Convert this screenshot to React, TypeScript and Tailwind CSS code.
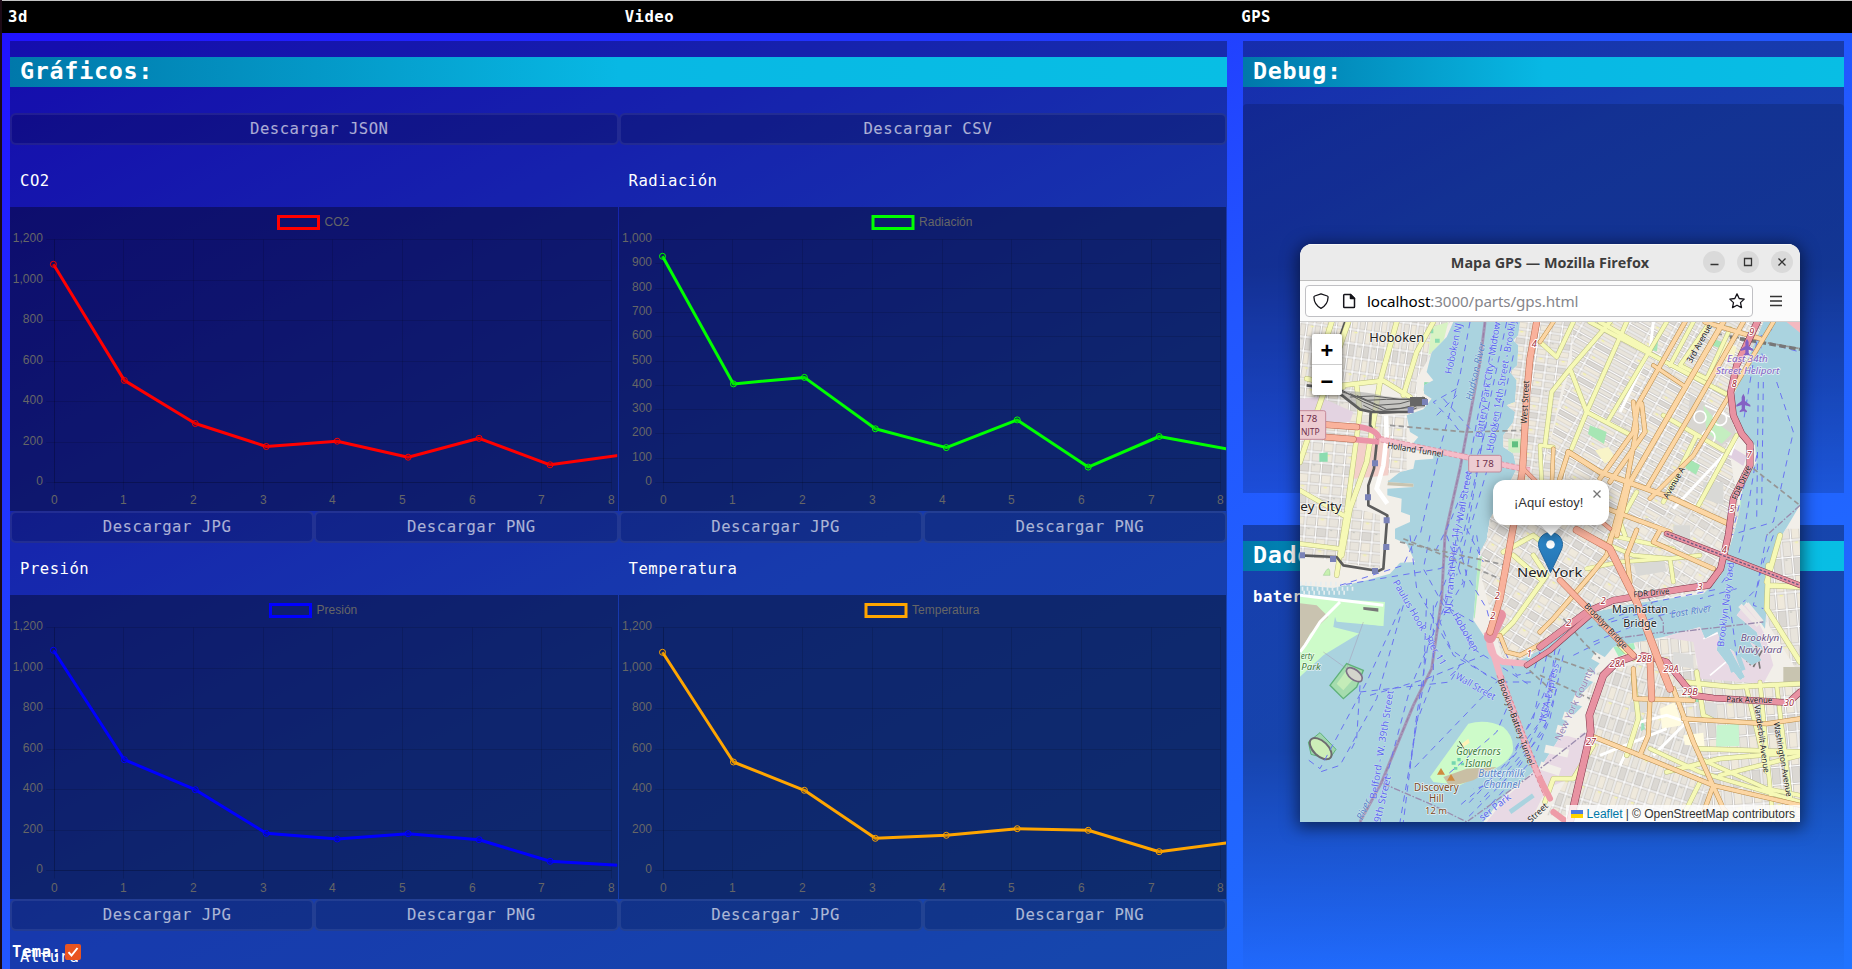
import React from "react";

const MONO = "font-['DejaVu_Sans_Mono','Liberation_Mono',monospace]";
const MONO_BOLD = "font-['DejaVu_Sans_Mono','Liberation_Mono',monospace] font-bold";

/* ---------- Charts ---------- */

type ChartProps = {
  label: string;
  color: string;
  legendX: number;
  originX: number;
  max: number;
  step: number;
  points: number[];
};

function LineChart({ label, color, legendX, originX, max, step, points }: ChartProps) {
  const top = 32.5;
  const bottom = 275.5;
  const gridStep = 69.68;
  const ticks: number[] = [];
  for (let v = 0; v <= max; v += step) ticks.push(v);
  const yOf = (v: number) => Math.round(bottom - (v / max) * (bottom - top) - 0.5) + 0.5;
  const xOf = (i: number) => Math.round(originX + i * gridStep - 0.5) + 0.5;
  const px = (i: number) => originX - 0.8 + i * 70.95;
  const line = points.map((y, i) => `${px(i)},${y}`).join(" ");
  return (
    <svg className="block h-[304px] w-full bg-black/[0.36]" fontFamily="'Liberation Sans', Arial, sans-serif" fontSize="12" fill="#666">
      <g stroke="rgba(0,0,0,0.12)" strokeWidth="1">
        {ticks.map((v) => (
          <line key={v} x1={originX - 8} x2={xOf(8)} y1={yOf(v)} y2={yOf(v)} />
        ))}
        {[0, 1, 2, 3, 4, 5, 6, 7, 8].map((i) => (
          <line key={i} x1={xOf(i)} x2={xOf(i)} y1={top} y2={bottom + 8} />
        ))}
        <line x1={originX} x2={xOf(8)} y1={bottom} y2={bottom} />
        <line x1={xOf(0)} x2={xOf(0)} y1={top} y2={bottom} />
      </g>
      {ticks.map((v) => (
        <text key={v} x={originX - 11.3} y={yOf(v) + 2.5} textAnchor="end">
          {v.toLocaleString("en-US")}
        </text>
      ))}
      {[0, 1, 2, 3, 4, 5, 6, 7, 8].map((i) => (
        <text key={i} x={xOf(i) - 0.2} y={297} textAnchor="middle">
          {i}
        </text>
      ))}
      <rect x={legendX + 1.5} y={9.5} width={40} height={12} fill="none" stroke={color} strokeWidth="3" />
      <text x={legendX + 47.6} y={18.5}>
        {label}
      </text>
      <svg x="0" y="0" width={originX + 563} height="304">
        <polyline points={line} fill="none" stroke={color} strokeWidth="3" strokeLinejoin="round" />
        {points.slice(0, 8).map((y, i) => (
          <circle key={i} cx={px(i)} cy={y} r="3" fill="rgba(0,0,0,0.1)" stroke={color} strokeWidth="1" />
        ))}
      </svg>
    </svg>
  );
}

function DownloadButton({ children }: { children: React.ReactNode }) {
  return (
    <button
      className={`h-8 flex-1 rounded-[6px] border-2 border-white/[0.07] bg-black/20 pl-[10px] text-center text-[15.6px] leading-[26px] tracking-[0.5px] text-white/65 ${MONO}`}
    >
      {children}
    </button>
  );
}

function ChartCard(props: ChartProps) {
  return (
    <div className="flex w-1/2 flex-col">
      <div className={`flex h-[52px] items-center pl-[10px] pt-[2px] text-[15.6px] tracking-[0.5px] text-white ${MONO}`}>{props.label}</div>
      <div className="mr-px">
        <LineChart {...props} />
      </div>
      <div className="flex">
        <DownloadButton>Descargar JPG</DownloadButton>
        <DownloadButton>Descargar PNG</DownloadButton>
      </div>
    </div>
  );
}

const charts: ChartProps[] = [
  { label: "CO2", color: "#ff0000", legendX: 267, originX: 44.2, max: 1200, step: 200, points: [57.3, 173.4, 216.5, 239.5, 234.2, 250.2, 231.3, 257.8, 248] },
  { label: "Radiación", color: "#00ff00", legendX: 252.5, originX: 44.3, max: 1000, step: 100, points: [49.3, 176.9, 170.4, 221.8, 240.6, 212.9, 260.1, 229.5, 242.5] },
  { label: "Presión", color: "#0000ff", legendX: 259, originX: 44.2, max: 1200, step: 200, points: [55.3, 164.7, 194.7, 238.3, 244, 238.7, 244.7, 266.3, 270.3] },
  { label: "Temperatura", color: "#ffa500", legendX: 245.5, originX: 44.3, max: 1200, step: 200, points: [57.3, 167, 195.3, 243.3, 240.3, 233.7, 235.3, 256.7, 247.5] },
];

function SectionTitle({ children }: { children: React.ReactNode }) {
  return (
    <h2
      className={`h-[30px] bg-[linear-gradient(90deg,#0078aa,#08b8e4_50%,#08bee4)] pl-[10px] text-[23.4px] leading-[29px] tracking-[0.7px] text-white ${MONO_BOLD}`}
    >
      {children}
    </h2>
  );
}

/* ---------- Map ---------- */

type Road = [string, number];

const yellow: Road[] = [
  ["M145 0L30 330L0 420", 14], ["M95 0L60 110M290 0L240 180L200 420L150 560L125 700", 14], ["M400 0L350 90L310 220", 13],
  ["M125 190L250 176L330 225M20 170L130 195M170 190L180 270L140 570L110 760", 13], ["M0 505L130 580M0 665L120 680", 12],
  ["M820 0L770 105L720 60M810 140L755 210L735 370M810 140L860 270L815 380M980 0L860 270M930 0L810 140", 12],
  ["M870 0L1040 90L1290 222M860 270L985 335M1090 280L1270 385M900 0L1050 85", 12], ["M1100 0L925 295M1180 0L1110 130M1230 0L1140 130L1220 170L1290 20", 11],
  ["M1190 340L1090 540M1310 340L1190 560M1010 510L960 600L975 640", 12], ["M720 370L760 375M720 370L725 480", 10],
  ["M860 640L1000 700L1110 710L1200 700M1110 710L1120 780M860 740L960 720L1090 710M930 640L1120 680", 11],
  ["M610 690L700 640L750 680M700 700L740 760L640 900L600 940M640 700L720 770", 13],
  ["M1405 790L1500 795M1405 730L1400 860L1500 1020M1440 640L1400 780", 14],
  ["M1150 1080L1300 1095L1500 1085M1190 1050L1210 1180L1240 1195M1190 1280L1500 1290M1100 1350L1260 1310L1500 1290", 13],
  ["M1050 1280L1200 1350L1500 1440M1200 1310L1400 1400L1500 1420M1380 1080L1420 1500M1430 1090L1480 1500M1340 1100L1400 1350", 11],
  ["M1000 1060L1015 1190L980 1300M880 1270L820 1370L760 1370L735 1440M960 970L1000 1010", 13],
  ["M1200 1380L1150 1480M1260 1360L1500 1300", 12],
];

const orange: Road[] = [
  ["M1155 0L1015 245L1000 330L900 470M1025 245L1035 330L930 480", 12], ["M1270 0L1130 240L985 490L950 640", 14],
  ["M1330 0L1170 280L1040 500", 12], ["M1420 0L1180 400L1050 530", 11], ["M1215 0L1380 50", 12],
  ["M805 390L900 450L1120 530L1285 605", 14], ["M805 390L770 500", 12], ["M1000 240L1010 320L980 480L920 700L880 750L760 890L720 930", 12],
  ["M870 540L1000 590L1110 630M980 500L950 600L920 680", 12], ["M1010 624L980 700L990 780M1080 624L1060 660L1240 740", 12],
  ["M1000 1040L1005 1130L1180 1135M1050 1130L1045 1240L1020 1300M1120 1100L1180 1260L1270 1460L1310 1500M1150 1190L1400 1205L1500 1190", 12],
  ["M870 1240L1020 1300L1240 1390L1500 1450M1240 1390L1200 1500", 12], ["M560 940L600 940L620 990L660 1000L750 950", 11],
  ["M720 60L760 0M1060 130L1150 190M760 380L755 500", 10],
];

const red: Road[] = [
  ["M1372 0L1310 130L1292 210L1300 280L1325 335L1350 365L1350 430L1300 530L1285 640L1262 740L1225 790L1150 800L940 835L860 870L720 975", 18],
  ["M1100 635L1500 790", 14], ["M680 1030L750 985L870 880", 14],
  ["M1000 1003L950 1020L910 1060L868 1180L872 1230L810 1500", 20], ["M1030 1000L1100 1020L1180 1120L1240 1128L1465 1142L1500 1110", 17],
];

const salmon: Road[] = [
  ["M710 0L690 110L680 220L668 440L650 560L600 830L570 930", 18], ["M830 624L930 680L1010 840L1070 1000L1110 1100", 20],
  ["M780 775L1000 1000", 16], ["M1050 1010L1055 1130", 18], ["M75 308L170 315M75 345L160 352", 17],
  ["M670 440L710 480L780 520L870 570L930 620", 10],
];

const ferries = [
  "M510 0L480 160L420 380L360 640", "M620 0L560 280L500 640L470 760", "M590 0L530 300L470 640L440 840L330 1100L250 1400",
  "M560 300L490 640L400 870L350 1180L310 1500", "M540 380L450 600L400 700", "M640 100L580 380L510 620", "M470 200L400 240L450 290L480 330",
  "M430 230L510 320M410 280L470 220M350 640L310 730L120 790L420 740L500 700", "M330 640L350 800L450 980L560 1060",
  "M390 640L370 740L430 850L520 900", "M300 860L200 1080L60 1340L20 1310", "M310 850L230 1130L120 1330L60 1350", "M180 1090L170 1250L150 1290",
  "M180 1110L450 1080L520 960", "M210 1120L380 1070L550 1000", "M470 640L500 760L560 860L580 940", "M440 640L490 780L420 900L460 1000L600 1080L700 1080",
  "M530 640L540 700M500 620L550 720M520 640L490 800M430 830L520 980L690 1090", "M600 1070L340 1340", "M400 850L400 1070L350 1200L330 1340", "M380 830L370 1090L300 1500",
  "M620 1160L590 1230L440 1360M600 960L650 1060L700 1050L720 990", "M1370 50L1420 20M1370 55L1500 90M1370 60L1330 300M1380 60L1390 120M1375 180L1370 600M1390 180L1385 560M1430 180L1480 330L1420 600L1290 640",
  "M1360 380L1300 620M1370 400L1330 640M1330 640L1310 720L1260 790", "M860 920L1060 840L1260 800M880 960L1080 880L1240 850M900 910L1100 850M820 1000L900 960",
  "M1310 800L1200 830M1400 640L1370 800L1330 840M1420 640L1390 720L1360 850L1390 860M1290 850L1310 1000",
  "M780 980L730 1120L640 1300L500 1450", "M765 980L745 1150L680 1280L540 1440", "M790 1000L750 1190L700 1310L560 1460", "M760 1040L720 1200L620 1330L480 1450", "M750 1060L740 1200L660 1330L500 1490",
  "M770 1100L730 1230L610 1380L520 1400", "M740 1000L700 1190L640 1290",
];

const rails = [
  "M100 190L190 240L250 265L300 260L380 240", "M100 200L200 235L260 232L380 232", "M150 215L230 250L300 245L370 225", "M170 220L260 262L340 256L375 238",
  "M150 225L220 222L300 232L380 230", "M190 250L240 275L320 270L350 258",
];

const ped = ["M270 310L500 330L670 325", "M300 660L620 730M310 650L600 770", "M1250 35L1500 80", "M1360 440L1500 550", "M720 1060L870 1130M740 1000L880 1050M650 1010L760 1110M790 890L850 960L900 1010"];

type Lbl = { t: string; x: number; y: number; r?: number; s?: number; c?: string; i?: boolean; w?: number };

const labels: Lbl[] = [
  { t: "Hoboken NJ", x: 462, y: 80, r: -78, s: 30, c: "#6068f0", w: 155 },
  { t: "Hudson River", x: 528, y: 148, r: -77, s: 30, c: "#5a86c8", i: true, w: 178 },
  { t: "Battery Park City - Midtown", x: 566, y: 165, r: -81, s: 29, c: "#6068f0", w: 370 },
  { t: "Hoboken 14th Street - Brooklyn", x: 606, y: 180, r: -80, s: 29, c: "#6068f0", w: 420 },
  { t: "J / Wall Street", x: 490, y: 540, r: -80, s: 29, c: "#6068f0", w: 190 },
  { t: "West Street", x: 675, y: 240, r: -87, s: 26, c: "#222", w: 130 },
  { t: "Holland Tunnel", x: 346, y: 383, r: 9, s: 26, c: "#222", w: 170 },
  { t: "3rd Avenue", x: 1198, y: 64, r: -61, s: 26, c: "#222", w: 128 },
  { t: "Avenue A", x: 1122, y: 482, r: -60, s: 26, c: "#222", w: 104 },
  { t: "East 34th", x: 1342, y: 119, s: 29, c: "#8461c4", i: true, w: 122 },
  { t: "Street Heliport", x: 1343, y: 155, s: 29, c: "#8461c4", i: true, w: 190 },
  { t: "FDR Drive", x: 1324, y: 482, r: -67, s: 25, c: "#222", w: 108 },
  { t: "FDR Drive", x: 1054, y: 812, r: -6, s: 25, c: "#222", w: 108 },
  { t: "Brooklyn Bridge", x: 918, y: 912, r: 47, s: 26, c: "#222", w: 176 },
  { t: "Manhattan", x: 1020, y: 874, s: 33, c: "#222", w: 168 },
  { t: "Bridge", x: 1020, y: 914, s: 33, c: "#222", w: 100 },
  { t: "East River", x: 1173, y: 869, r: -9, s: 29, c: "#5a86c8", i: true, w: 124 },
  { t: "Brooklyn Navy Yard", x: 1278, y: 848, r: -83, s: 29, c: "#6068f0", w: 255 },
  { t: "Brooklyn", x: 1380, y: 958, s: 29, c: "#6d5487", i: true, w: 116 },
  { t: "Navy Yard", x: 1380, y: 994, s: 29, c: "#6d5487", i: true, w: 132 },
  { t: "Park Avenue", x: 1348, y: 1133, r: 1, s: 25, c: "#222", w: 138 },
  { t: "Vanderbilt Avenue", x: 1386, y: 1250, r: 82, s: 25, c: "#222", w: 205 },
  { t: "Washington Avenue", x: 1449, y: 1312, r: 80, s: 25, c: "#222", w: 226 },
  { t: "New York County", x: 824, y: 1146, r: -65, s: 29, c: "#9a86b4", w: 240 },
  { t: "IKEA Express", x: 748, y: 1112, r: -77, s: 29, c: "#6068f0", w: 180 },
  { t: "Brooklyn-Battery Tunnel", x: 648, y: 1200, r: 70, s: 26, c: "#222", w: 275 },
  { t: "Paulus Hook - Pier 11", x: 358, y: 902, r: 60, s: 29, c: "#6068f0", w: 290 },
  { t: "/ Wall Street", x: 519, y: 1090, r: 30, s: 29, c: "#6068f0", w: 150 },
  { t: "NJ Transit Pier 11", x: 456, y: 745, r: -84, s: 29, c: "#6068f0", w: 265 },
  { t: "Hoboken", x: 496, y: 930, r: 60, s: 29, c: "#6068f0", w: 130 },
  { t: "Belford - W. 39th Street", x: 246, y: 1268, r: -81, s: 29, c: "#6068f0", w: 330 },
  { t: "39th Street", x: 246, y: 1440, r: -77, s: 29, c: "#6068f0", w: 160 },
  { t: "River", x: 192, y: 1462, r: -66, s: 29, c: "#5a86c8", i: true, w: 66 },
  { t: "Governors", x: 535, y: 1300, s: 30, c: "#43803f", i: true, w: 134 },
  { t: "Island", x: 535, y: 1334, s: 30, c: "#43803f", i: true, w: 80 },
  { t: "Buttermilk", x: 604, y: 1364, s: 30, c: "#5a86c8", i: true, w: 138 },
  { t: "Channel", x: 605, y: 1398, s: 30, c: "#5a86c8", i: true, w: 110 },
  { t: "Discovery", x: 409, y: 1406, s: 30, c: "#7d4a25", w: 134 },
  { t: "Hill", x: 409, y: 1441, s: 30, c: "#7d4a25", w: 44 },
  { t: "12 m", x: 408, y: 1476, s: 29, c: "#7d4a25", w: 66 },
  { t: "ser Park", x: 585, y: 1456, r: -38, s: 29, c: "#6068f0", w: 112 },
  { t: "Street", x: 713, y: 1472, r: -43, s: 26, c: "#222", w: 72 },
  { t: "erty", x: 22, y: 1010, s: 29, c: "#43803f", i: true, w: 40 },
  { t: "Park", x: 33, y: 1043, s: 29, c: "#43803f", i: true, w: 58 },
  { t: "Hoboken", x: 290, y: 60, s: 36, c: "#222", w: 165 },
  { t: "ey City", x: 63, y: 566, s: 40, c: "#222", w: 124 },
  { t: "New York", x: 749, y: 766, s: 40, c: "#222", w: 196 },
];

const exits: Lbl[] = [
  { t: "4", x: 703, y: 76 }, { t: "9", x: 1355, y: 38 }, { t: "8", x: 1303, y: 195 }, { t: "7", x: 1348, y: 408 }, { t: "5", x: 1296, y: 570 },
  { t: "4", x: 1273, y: 692 }, { t: "3", x: 1200, y: 803 }, { t: "2", x: 910, y: 846 }, { t: "2", x: 806, y: 912 }, { t: "2", x: 592, y: 830 },
  { t: "2", x: 578, y: 892 }, { t: "1", x: 688, y: 1006 }, { t: "28A", x: 952, y: 1034 }, { t: "28B", x: 1033, y: 1021 }, { t: "29A", x: 1113, y: 1049 },
  { t: "29B", x: 1170, y: 1119 }, { t: "27", x: 873, y: 1268 }, { t: "30", x: 1467, y: 1152 },
];

function RoadGroup({ roads, fill, casing }: { roads: Road[]; fill: string; casing: string }) {
  return (
    <g fill="none" strokeLinejoin="round" strokeLinecap="round">
      {roads.map(([d, w], i) => (
        <path key={`c${i}`} d={d} stroke={casing} strokeWidth={w + 3} />
      ))}
      {roads.map(([d, w], i) => (
        <path key={`f${i}`} d={d} stroke={fill} strokeWidth={w} />
      ))}
    </g>
  );
}

function BlockPattern({ id, w, h, angle }: { id: string; w: number; h: number; angle: number }) {
  return (
    <pattern id={id} width={w * 2} height={h * 3} patternUnits="userSpaceOnUse" patternTransform={`rotate(${angle})`}>
      <rect width={w * 2} height={h * 3} fill="#ffffff" />
      <g fill="#e8e4dc" stroke="#b9b5b1" strokeWidth="1.8">
        {[0, 1, 2].map((r) => (
          <g key={r}>
            <rect x="3" y={r * h + 3} width={w - 6} height={h - 6} />
            <rect x={w + 3} y={r * h + 3} width={w - 6} height={h - 6} fill={r === 1 ? "#dbd8d3" : "#efe9dc"} />
          </g>
        ))}
      </g>
      <rect x="8" y={h + 5} width="7" height="4" fill="#c9c9c4" />
      <rect x={w + 12} y="6" width="9" height="4" fill="#f4f4a8" />
    </pattern>
  );
}

const NJ = "M0 0H460L440 45L395 90L380 150L400 175L372 190V215L395 230L370 262L320 280L330 330L355 345L325 380L400 395L400 410L345 415L340 440L300 450L262 480L340 485V495L262 500L262 520L305 530L303 570L330 580V600L285 620L285 650L320 665L345 720L300 722L270 755L200 775L100 798L0 790Z";
const MANHATTAN = "M660 0L655 40L640 55L655 70L652 130L630 150L650 175L645 240L620 250L645 270L640 300L610 340L610 375L640 395L650 440L610 520L570 590L560 654L535 700L528 794L520 894L560 954L605 1020L640 1024L720 984L790 925L870 872L1000 845L1210 815L1262 760L1300 640L1320 560L1330 480L1370 420L1365 370L1310 320L1295 240L1330 140L1390 0Z";
const BROOKLYN = "M940 975L1090 945L1200 915L1215 950L1260 925L1250 985L1320 1075L1335 1065L1290 980L1355 1030L1385 1015L1350 960L1390 985L1370 930L1310 880L1340 840L1395 920L1410 724L1440 650L1500 549V1500H550L610 1424L730 1324L780 1244L790 1210L850 1150L840 1120L880 1080L885 1040Z";

function CityMap() {
  return (
    <svg viewBox="0 0 1500 1500" className="block h-[500px] w-[500px]" fontFamily="'Noto Sans', 'Open Sans', sans-serif">
      <defs>
        <BlockPattern id="eastSide" w={62} h={19} angle={29} />
        <BlockPattern id="village" w={34} h={24} angle={8} />
        <BlockPattern id="downtown" w={36} h={28} angle={32} />
        <BlockPattern id="hoboken" w={22} h={42} angle={8} />
        <BlockPattern id="jersey" w={34} h={32} angle={5} />
        <BlockPattern id="heights" w={26} h={44} angle={18} />
        <BlockPattern id="clinton" w={30} h={52} angle={-5} />
        <clipPath id="clipNJ"><path d={NJ} /></clipPath>
        <clipPath id="clipManhattan"><path d={MANHATTAN} /></clipPath>
        <clipPath id="clipBrooklyn"><path d={BROOKLYN} /></clipPath>
      </defs>
      <rect width="1500" height="1500" fill="#aad3df" />
      <path d={NJ} fill="#f2efe9" />
      <path d={MANHATTAN} fill="#f2efe9" />
      <path d={BROOKLYN} fill="#f2efe9" />

      <g clipPath="url(#clipNJ)">
        <path d="M0 0H450L350 170V225L240 180L0 170Z" fill="url(#hoboken)" />
        <path d="M0 170L170 190V560L0 505Z" fill="url(#jersey)" />
        <path d="M0 510L240 580V740L0 700ZM180 280H320V450L180 460Z" fill="url(#jersey)" />
        <path d="M0 230L60 225L160 270L150 300L0 300Z" fill="#e3d3e1" />
        <path d="M170 350L270 340L265 460L160 470Z" fill="#f3cfc9" />
        <path d="M265 475L345 480V495L262 490Z" fill="#c8c4b0" />
        <path d="M395 15L445 0L430 60L385 100Z" fill="#d8f3c4" />
        <path d="M382 20h18v14h-18zM405 50h14v12h-14zM373 180l40 4v22h-42zM58 394l25-3v28h-25z" fill="#8bdcb0" />
        <path d="M70 760q20-40 20 0z" fill="#c8f0b0" stroke="#6fb46f" />
      </g>

      <path d="M0 824L255 840L250 912L110 899L105 915L185 930L70 1000L0 1064Z" fill="#cdfbc9" />
      <path d="M105 884L110 899L180 915L250 912L190 925L180 935L100 915Z" fill="#aad3df" />
      <path d="M105 870L250 880L250 912L110 895Z" fill="#cdfbc9" />
      <path d="M0 844L50 850L85 884L30 935L0 994Z" fill="#c9c3b0" />
      <path d="M0 820L250 850M120 840L60 900L15 970L0 990" stroke="#ffffff" strokeWidth="9" fill="none" />
      <path d="M190 855l45 4v10l-45-6z" fill="#777" />
      <path d="M0 785h165M5 800h160M10 812h130" stroke="#e6eef0" strokeWidth="12" strokeDasharray="5 10" fill="none" />
      <path d="M90 1090l50-65 50 20-20 50-40 35z" fill="#a5dcae" stroke="#5fb27a" strokeWidth="4" />
      <path d="M110 1085l30-40 30 15-40 45z" fill="#c4ecb8" />
      <ellipse cx="163" cy="1058" rx="28" ry="15" transform="rotate(38 163 1058)" fill="#d4d4cc" stroke="#7d6f86" strokeWidth="5" />
      <path d="M25 1260l35-28 48 50-20 30-55-15z" fill="#9fd6ae" stroke="#5fb27a" strokeWidth="3" />
      <ellipse cx="62" cy="1280" rx="40" ry="22" transform="rotate(44 62 1280)" fill="#cdeeb8" stroke="#6d6b70" strokeWidth="6" />

      <path d="M505 1205Q560 1190 610 1215Q645 1245 638 1290Q620 1330 560 1350L480 1390L400 1380L390 1365Z" fill="#cdfbc9" />
      <path d="M430 1365L500 1340L590 1335L520 1375L450 1395Z" fill="#c9bfa4" />
      <path d="M455 1318h12v10h-12zM472 1308h10v10h-10zM462 1335h10v8h-10zM482 1322h10v8h-10z" fill="#74d6b0" />
      <path d="M485 1265l20-15 4 12-20 14z" fill="#fff3b8" />
      <path d="M478 1258l14 22M472 1272l14 8" stroke="#444" strokeWidth="3" />
      <path d="M411 1358l12-20 12 20zM441 1376l12-20 12 20z" fill="#cf8a3e" />

      <g clipPath="url(#clipManhattan)">
        <path d="M640 0H830L740 400L930 470V640H560Z" fill="url(#village)" />
        <path d="M820 0H1390L1290 400L1330 640L940 600L740 400L815 120Z" fill="url(#eastSide)" />
        <path d="M500 590L1000 600L940 860L620 1060Z" fill="url(#downtown)" />
        <path d="M900 600L1330 560L1250 800L850 870Z" fill="url(#downtown)" opacity="0.85" />
        <path d="M1170 220L1290 280L1310 340L1260 375L1160 320Z" fill="#d8d6d2" />
        <path d="M1210 250l50 60 35 25-30 30-45-35z" fill="#c4eec0" />
        <g fill="none" stroke="#fff" strokeWidth="5"><circle cx="1200" cy="285" r="18" /><circle cx="1260" cy="290" r="20" /><circle cx="1225" cy="345" r="20" /><path d="M1215 250l75 35" /></g>
        <path d="M1290 372l50 30-10 30-50-32z" fill="#e0cfe0" />
        <path d="M1240 50l40 15-8 18-40-15zM870 310l50 20-8 36-48-30zM1165 410l35 20-12 28-32-20zM1060 60l15-12-4 40-16-4z" fill="#a6e6b4" />
        <path d="M1320 540l12-40 18-60 8 2-10 100-20 80h-18z" fill="#a7eec0" />
        <path d="M1000 720l90-12 10 40-90 15zM1120 610h50v50h-50zM1210 480h60v70l-60-20z" fill="#d9d9d6" />
        <path d="M1270 55l40 20-14 50-36-25zM885 385l40-10 20 30-30 20z" fill="#f8f4c8" />
        <path d="M1300 130l40 40v30l-30-10z" fill="#d8e4d8" />
        <path d="M526 720l20-20-12 100-10 90-8-10z" fill="#b6ecc0" />
        <path d="M625 350h40v42h-40z" fill="#cfeec4" />
        <rect x="636" y="358" width="18" height="18" fill="#5fbf80" />
      </g>

      <g clipPath="url(#clipBrooklyn)">
        <path d="M860 1060L1120 1000L1240 1480H740L870 1240Z" fill="url(#heights)" />
        <path d="M1100 1010L1500 1100V1500H1240L1150 1160Z" fill="url(#clinton)" />
        <path d="M1000 960L1180 940L1190 1040L1040 1010Z" fill="url(#clinton)" />
        <path d="M1400 620H1500V1060L1400 900Z" fill="url(#clinton)" />
        <path d="M1090 945L1200 915L1320 850L1350 850L1395 940L1420 1030L1390 1085L1200 1070L1180 960Z" fill="#e8d9e4" />
        <path d="M780 1244L870 1230L830 1360L740 1400L690 1500H560L620 1424L730 1324Z" fill="#e8d9e4" />
        <path d="M1210 950l50-20 30 20v60l-60 50" fill="none" stroke="#fff" strokeWidth="5" />
        <path d="M1450 1035h50v60h-50z" fill="#c8c4b0" />
        <path d="M1250 1210l66-4 2 66-70 2z" fill="#c6f5cf" />
        <path d="M1165 1100h36v40h-36zM1025 1180l10 40-12 8z" fill="#9fe2bc" />
        <path d="M1080 1160l44-20 22 70-60 10zM1150 1240l60-8 4 42-60-6z" fill="#fffbe0" />
        <path d="M940 975l60-15 6 20-50 24z" fill="#a7eec0" />
        <path d="M990 1140h60v30h-60zM1120 990l60 10v40l-60-10zM1190 1140l60 4v60l-60-20z" fill="#dcdcda" />
        <path d="M1340 1020l30-40 10 60M1350 1030l20-60M1360 1035l26-50" stroke="#777" strokeWidth="5" fill="none" />
      </g>
      <g stroke="#aad3df" strokeWidth="14"><path d="M1230 840L1300 1050M1260 850L1330 1045M1300 880L1360 1000M630 1470L700 1420" /></g>
      <path d="M1320 850l55 60M1340 845l45 55" stroke="#eee8e6" strokeWidth="14" />
      <path d="M880 1000l45 25M860 1060l40 15M820 1130l50 20M790 1180l60 20M770 1220l70 20M735 1280l70 15M720 1330l60 20" stroke="#f2efe9" strokeWidth="24" />
      <path d="M1460 0H1500V32Z" fill="#f3b9c0" />

      <path d="M960 270L1050 85L1060 0M1270 400L1120 560M1310 345L1290 400M1060 1300L1160 1200L1100 1180L1020 1200L960 1330M900 1300L1100 1220" stroke="#fff" strokeWidth="9" fill="none" />
      <path d="M70 990L140 1040L190 900" stroke="#a58ba8" strokeWidth="2" fill="none" opacity="0.6" />
      <path d="M555 0L540 120L480 440L435 640L425 830L395 1040L340 1150L245 1380L180 1500" stroke="#a58bb0" strokeWidth="9" fill="none" opacity="0.85" />
      <path d="M555 0L540 120L480 440L435 640L425 830L395 1040L340 1150L245 1380L180 1500" stroke="#8f6f9c" strokeWidth="2" strokeDasharray="16 6 4 6" fill="none" />
      <path d="M250 1385L400 1450L500 1500L720 1340L860 1230M1500 550L1400 640M1040 820L1090 900V935L1390 900M940 950L1090 930" stroke="#9a8cae" strokeWidth="4" strokeDasharray="20 5 5 5" fill="none" />
      <g fill="none" stroke="#6a73f2" strokeWidth="3" strokeDasharray="19 16">
        {ferries.map((d, i) => (
          <path key={i} d={d} />
        ))}
      </g>
      <g fill="none" stroke="#969696" strokeWidth="5" strokeDasharray="16 10">
        {ped.map((d, i) => (
          <path key={i} d={d} />
        ))}
      </g>
      <path d="M1290 45L1500 82" stroke="#777" strokeWidth="10" strokeDasharray="20 10" />

      <path d="M135 0L100 100L75 190" stroke="#555" strokeWidth="7" fill="none" />
      <RoadGroup roads={yellow} fill="#f6f9b6" casing="#b9bc80" />
      <RoadGroup roads={orange} fill="#fcd6a4" casing="#b98a45" />
      <path d="M110 205Q210 210 250 222Q320 232 375 228V255Q320 275 240 272Q180 265 170 250Z" fill="#a9a9a9" opacity="0.6" />
      <g fill="none" stroke="#5f5f5f" strokeWidth="3">
        {rails.map((d, i) => (
          <path key={i} d={d} />
        ))}
      </g>
      <path d="M20 190L100 200L180 262L215 270L330 270M212 270L210 310L232 345L222 440L205 490V550L262 580L250 740L235 747L130 730L110 705L0 700" fill="none" stroke="#5c5c5c" strokeWidth="8" strokeLinejoin="round" />
      <path d="M258 280L260 340L250 430L230 500L262 545" fill="none" stroke="#fff" strokeWidth="14" />
      <path d="M330 225h45v28h-45z" fill="#666" />
      <path d="M160 313Q230 318 238 350M160 352L238 360" fill="none" stroke="#eb94a8" strokeWidth="17" />
      <path d="M242 352L690 445" fill="none" stroke="#f5bcc8" strokeWidth="16" />
      <path d="M242 344L690 437M242 360L690 453" fill="none" stroke="#d88a9a" strokeWidth="2" strokeDasharray="10 6" />
      <path d="M570 940Q560 1000 610 1020L680 1025M560 930L600 1060L690 1300L740 1420" fill="none" stroke="#f3b3bf" strokeWidth="19" />
      <path d="M591 1060L681 1300L731 1420M609 1060L699 1300L749 1420" fill="none" stroke="#d5808f" strokeWidth="2.5" strokeDasharray="10 6" />
      <path d="M600 880L570 945" stroke="#e892a2" strokeWidth="36" strokeLinecap="round" />
      <RoadGroup roads={red} fill="#e892a2" casing="#7c3347" />
      <RoadGroup roads={salmon} fill="#f9b29c" casing="#b9694f" />
      <path d="M1100 635L1500 790" stroke="#6a5a80" strokeWidth="4" strokeDasharray="8 5" />
      <path d="M720 1370L750 1430M760 1470L800 1500" stroke="#ee9ca8" strokeWidth="18" strokeLinecap="round" />

      <path
        d="M366 231h18v18h-18zM323 255h18v18h-18zM216 415h18v18h-18zM195 517h18v18h-18zM251 586h18v18h-18zM250 666h18v18h-18zM216 738h18v18h-18zM90 702h18v18h-18zM-3 691h18v18H-3z"
        fill="#7a82b8"
      />
      <path
        d="M1341 50l5 10v12l14 10v5l-14-4v10l5 5v4l-10-3-10 3v-4l5-5V83l-14 4v-5l14-10V60zM1330 215l5 10v12l16 12v5l-16-5v12l6 6v4l-11-3-11 3v-4l6-6v-12l-16 5v-5l16-12v-12z"
        fill="#8461c4"
      />

      <g textAnchor="middle" strokeLinejoin="round">
        {labels.map((l, i) => (
          <text
            key={i}
            transform={`translate(${l.x} ${l.y}) rotate(${l.r ?? 0})`}
            fontSize={l.s}
            fill={l.c}
            fontStyle={l.i ? "italic" : "normal"}
            stroke="#ffffff"
            strokeOpacity={l.r ? 0.4 : 0.65}
            strokeWidth={l.r ? 3 : 5}
            paintOrder="stroke"
            textLength={l.w}
            lengthAdjust="spacingAndGlyphs"
            dy={l.r ? 9 : 0}
          >
            {l.t}
          </text>
        ))}
        {exits.map((l, i) => (
          <text key={i} x={l.x} y={l.y} fontSize="27" fill="#a02a35" fontStyle="italic" stroke="#ffffff" strokeWidth="6" paintOrder="stroke">
            {l.t}
          </text>
        ))}
        <g fill="#edccd2" stroke="#c58a9a" strokeWidth="3">
          <rect x="-10" y="266" width="87" height="86" rx="6" />
          <rect x="506" y="400" width="98" height="50" rx="6" />
        </g>
        <g fill="#70304c" fontSize="29">
          <text x="27" y="300" textLength="50">I 78</text>
          <text x="31" y="338" textLength="56" lengthAdjust="spacingAndGlyphs">NJTP</text>
          <text x="555" y="435" textLength="52">I 78</text>
        </g>
      </g>
    </svg>
  );
}

function MarkerPin() {
  return (
    <svg viewBox="0 0 25 41" className="absolute left-[238px] top-[210px] h-[41px] w-[25px]">
      <defs>
        <linearGradient id="pin" x1="0" y1="0" x2="0" y2="1">
          <stop offset="0" stopColor="#2e87c9" />
          <stop offset="1" stopColor="#2474b2" />
        </linearGradient>
      </defs>
      <path
        d="M12.5 .5C5.6 .5 .5 5.9 .5 12.4c0 2.7 1 5.3 2.3 7.8l9.7 20.3 9.7-20.3c1.3-2.5 2.3-5.1 2.3-7.8C24.5 5.9 19.4 .5 12.5 .5z"
        fill="url(#pin)"
        stroke="#2568a0"
      />
      <circle cx="12.5" cy="12.5" r="4.3" fill="#fff" />
    </svg>
  );
}

function MapWindow() {
  return (
    <div className="absolute left-[1298px] top-[244px] flex h-[578px] w-[500px] flex-col overflow-hidden rounded-t-[12px] bg-[#fbfbfb] shadow-[0_3px_16px_3px_rgba(0,0,0,0.5)]">
      <div className="relative flex h-[37px] shrink-0 items-center justify-end gap-3 border-b border-[#bdbdbd] bg-[#ebebeb] pr-[7px] shadow-[inset_0_1px_0_#f8f8f8]">
        <div className="absolute inset-0 flex items-center justify-center pt-px font-['Open_Sans','Noto_Sans',sans-serif] text-[14.4px] font-bold text-[#3d3d3d]">
          Mapa GPS — Mozilla Firefox
        </div>
        {["M7.5 13.5h8", "M7.5 7.5h7v7h-7z", "M7.5 7.5l7 7M14.5 7.5l-7 7"].map((d) => (
          <svg key={d} viewBox="0 0 22 22" className="relative -mt-px h-[22px] w-[22px] rounded-full bg-[#dadada]" fill="none" stroke="#333" strokeWidth="1.3">
            <path d={d} />
          </svg>
        ))}
      </div>
      <div className="flex h-[41px] shrink-0 items-center border-b border-[#cfcfcf] bg-[#fbfbfb] pl-[5px]">
        <div className="flex h-[32px] w-[448px] items-center rounded-[4px] border border-[#c0c0c4] bg-white px-[7px]">
          <svg viewBox="0 0 16 16" className="h-4 w-4" fill="none" stroke="#15141a" strokeWidth="1.3" strokeLinejoin="round">
            <path d="M8 .8L14.3 3c.5.2.8.6.8 1.1-.2 5.4-2.6 9.1-7.1 11.2C3.5 13.2 1.1 9.500.9 4.1c0-.5.3-.9.8-1.1z" />
          </svg>
          <svg viewBox="0 0 16 16" className="ml-3 h-4 w-4" fill="none" stroke="#15141a" strokeWidth="1.5" strokeLinejoin="round">
            <path d="M3.5 1.5h6l4 4v8.2c0 .5-.4.8-.8.8H3.5c-.5 0-.8-.4-.8-.8V2.3c0-.5.3-.8.8-.8z" />
            <path d="M9.5 1.5v4h4z" fill="#15141a" />
          </svg>
          <div className="ml-[10px] flex-1 whitespace-nowrap font-['Noto_Sans','Open_Sans',sans-serif] text-[15.2px] tracking-[-0.1px] text-[#85858a]">
            <span className="text-black">localhost</span>:3000/parts/gps.html
          </div>
          <svg viewBox="0 0 16 16" className="h-4 w-4" fill="none" stroke="#15141a" strokeWidth="1.3" strokeLinejoin="round">
            <path d="M8 .9l2.2 4.6 5 .6-3.7 3.5 1 5L8 12.2l-4.5 2.4 1-5L.8 6.1l5-.6z" />
          </svg>
        </div>
        <svg viewBox="0 0 14 12" className="ml-[16px] h-3 w-[14px]" stroke="#333" strokeWidth="1.3">
          <path d="M1 1.5h12M1 6h12M1 10.5h12" />
        </svg>
      </div>
      <div className="relative h-[500px] overflow-hidden font-['Liberation_Sans',Arial,sans-serif]">
        <CityMap />
        <div className="absolute left-3 top-3 flex w-[30px] flex-col rounded-[2px] bg-white text-center text-[22px] font-bold leading-[33px] text-black shadow-[0_1px_5px_rgba(0,0,0,0.65)]">
          <span className="h-[31px] border-b border-[#ccc]">+</span>
          <span className="h-[30px]">−</span>
        </div>
        <MarkerPin />
        <svg viewBox="0 0 40 20" className="absolute left-[231px] top-[202px] h-5 w-10 drop-shadow-[0_3px_6px_rgba(0,0,0,0.4)]">
          <path d="M8 0h24L20 12z" fill="#fff" />
        </svg>
        <div className="absolute left-[193px] top-[158px] flex h-[45px] w-[116px] items-center rounded-[12px] bg-white pl-[21px] text-[13px] text-[#333] shadow-[0_3px_14px_rgba(0,0,0,0.4)]">
          ¡Aquí estoy!
          <svg viewBox="0 0 8 8" className="absolute right-2 top-[10px] h-2 w-2" stroke="#757575" strokeWidth="1.3">
            <path d="M.5 .5l7 7M7.5 .5l-7 7" />
          </svg>
        </div>
        <div className="absolute bottom-0 right-0 flex h-[17px] items-center whitespace-nowrap bg-white/80 px-[5px] pt-px text-[12px] leading-[17px] text-[#333]">
          <span className="mr-1 flex h-2 w-3 flex-col">
            <span className="h-1 bg-[#4c7be1]" />
            <span className="h-1 bg-[#ffd500]" />
          </span>
          <span className="text-[#0078a8]">Leaflet</span>
          <span className="ml-[3px]">| © OpenStreetMap contributors</span>
        </div>
      </div>
    </div>
  );
}

/* ---------- Page ---------- */

const panelFade = "bg-[linear-gradient(to_bottom,rgba(0,0,0,0.32)_50%,transparent)]";

export default function App() {
  return (
    <div className="relative flex h-[969px] w-[1852px] flex-col overflow-hidden border-l-2 border-[#1c0a16] bg-[linear-gradient(to_bottom_right,#2010ff,#2256ff_50%,#2074ff)] bg-origin-border">
      <header className={`flex h-[33px] shrink-0 items-center border-t border-[#c4c4c4] bg-black pt-px text-[15.6px] tracking-[0.5px] text-white ${MONO_BOLD}`}>
        <div className="w-1/3 pl-[6px]">3d</div>
        <div className="w-1/3 pl-[6px]">Video</div>
        <div className="w-1/3 pl-[6px]">GPS</div>
      </header>
      <main className="flex min-h-0 flex-1 gap-4 px-2 pt-2">
        <section className="flex w-[1217px] flex-col bg-black/[0.32] pt-4">
          <SectionTitle>Gráficos:</SectionTitle>
          <div className="mb-[10px] mt-[26px] flex shrink-0">
            <DownloadButton>Descargar JSON</DownloadButton>
            <DownloadButton>Descargar CSV</DownloadButton>
          </div>
          <div className="flex flex-wrap">
            {charts.map((c) => (
              <ChartCard key={c.label} {...c} />
            ))}
          </div>
          <div className={`mt-[14px] pl-[10px] text-[15.6px] leading-6 tracking-[0.5px] text-white ${MONO}`}>Altura</div>
        </section>
        <div className="flex w-[601px] flex-col gap-8">
          <section className={`flex h-[452px] shrink-0 flex-col pt-4 ${panelFade}`}>
            <SectionTitle>Debug:</SectionTitle>
            <div className="mt-[17px] flex-1 rounded-t-[4px] bg-black/15" />
          </section>
          <section className={`h-[452px] shrink-0 pt-4 ${panelFade}`}>
            <SectionTitle>Dados:</SectionTitle>
            <p className={`mt-[14px] pl-[10px] text-[15.6px] leading-6 tracking-[0.5px] text-white ${MONO_BOLD}`}>bateria:</p>
          </section>
        </div>
      </main>
      <label className={`absolute left-[10px] top-[942px] flex items-center text-[15.6px] leading-5 tracking-[0.5px] text-white ${MONO_BOLD}`}>
        Tema:
        <span className="ml-1 flex h-4 w-4 items-center justify-center rounded-[2px] bg-[#e95420]">
          <svg viewBox="0 0 16 16" className="h-4 w-4" fill="none" stroke="#fff" strokeWidth="2">
            <path d="M3.5 8.2l3 3.3 6-7.5" />
          </svg>
        </span>
      </label>
      <MapWindow />
    </div>
  );
}
